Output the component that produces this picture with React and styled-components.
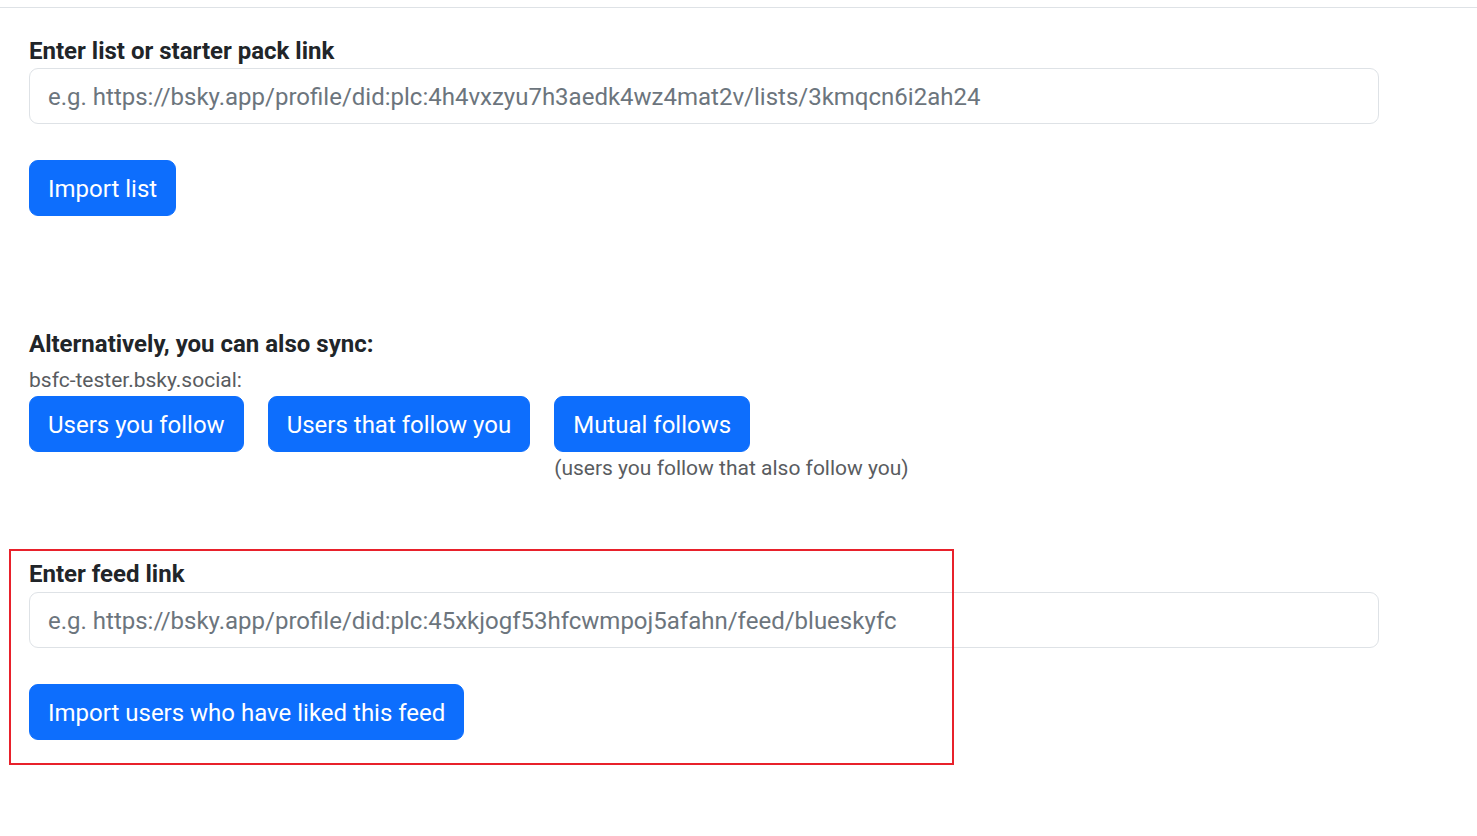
import React from 'react';
import styled, { createGlobalStyle } from 'styled-components';

const GlobalStyle = createGlobalStyle`
  body {
    margin: 0;
    background: #fff;
    font-family: Roboto, "Liberation Sans", sans-serif;
    color: #212529;
  }
`;

const TopBar = styled.div`
  height: 7px;
  border-bottom: 1px solid #dee2e6;
`;

const Page = styled.main`
  padding: 28.5px 29px 40px;
  width: 1350px;
`;

const Section = styled.section`
  position: relative;
  margin-top: ${({ $top }) => $top || 0}px;
`;

const Label = styled.label`
  display: block;
  font-size: 24px;
  font-weight: 700;
  line-height: 29px;
  margin-bottom: ${({ $gap }) => $gap || 0}px;
`;

const Input = styled.input`
  display: block;
  box-sizing: border-box;
  width: 100%;
  height: 56px;
  padding: 2px 18px 0;
  font-family: inherit;
  font-size: 24px;
  color: #212529;
  border: 1px solid #dee2e6;
  border-radius: 9px;
  outline: none;
  &::placeholder {
    color: #6c757d;
  }
`;

const Button = styled.button`
  box-sizing: border-box;
  height: 56px;
  padding: 2px 18px 0;
  font-family: inherit;
  font-size: 24px;
  color: #fff;
  background: #0d6efd;
  border: 1px solid #0d6efd;
  border-radius: 9px;
  cursor: pointer;
  margin-top: ${({ $top }) => $top || 0}px;
`;

const Muted = styled.div`
  font-size: 21px;
  line-height: 25px;
  color: #595c5f;
  margin-top: ${({ $top }) => $top || 0}px;
`;

const ButtonRow = styled.div`
  display: flex;
  gap: 24px;
  align-items: flex-start;
  margin-top: 3px;
`;

const ButtonStack = styled.div`
  display: flex;
  flex-direction: column;
  align-items: flex-start;
`;

const Highlight = styled.div`
  position: absolute;
  left: -20px;
  top: -11px;
  width: 945px;
  height: 216px;
  box-sizing: border-box;
  border: 2px solid #e8212b;
  pointer-events: none;
`;

export default function App() {
  return (
    <>
      <GlobalStyle />
      <TopBar />
      <Page>
        <Section>
          <Label $gap={2.5}>Enter list or starter pack link</Label>
          <Input placeholder="e.g. https://bsky.app/profile/did:plc:4h4vxzyu7h3aedk4wz4mat2v/lists/3kmqcn6i2ah24" />
          <Button $top={36}>Import list</Button>
        </Section>

        <Section $top={113.5}>
          <Label>Alternatively, you can also sync:</Label>
          <Muted $top={9}>bsfc-tester.bsky.social:</Muted>
          <ButtonRow>
            <Button>Users you follow</Button>
            <Button>Users that follow you</Button>
            <ButtonStack>
              <Button>Mutual follows</Button>
              <Muted $top={4.5}>(users you follow that also follow you)</Muted>
            </ButtonStack>
          </ButtonRow>
        </Section>

        <Section $top={79}>
          <Highlight />
          <Label $gap={2.5}>Enter feed link</Label>
          <Input placeholder="e.g. https://bsky.app/profile/did:plc:45xkjogf53hfcwmpoj5afahn/feed/blueskyfc" />
          <Button $top={36}>Import users who have liked this feed</Button>
        </Section>
      </Page>
    </>
  );
}
